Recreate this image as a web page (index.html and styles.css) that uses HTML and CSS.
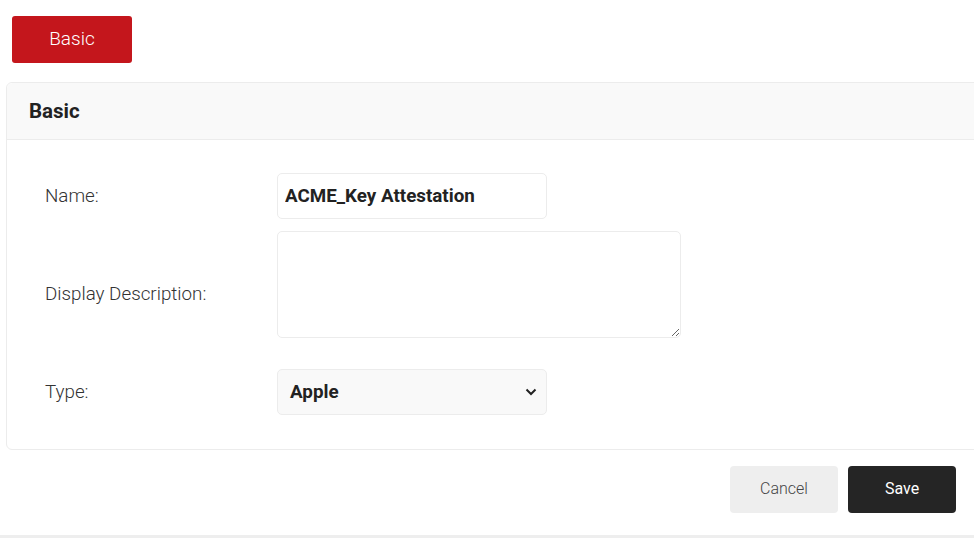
FILE: index.html
```html
<!DOCTYPE html>
<html>
<head>
<meta charset="utf-8">
<link rel="stylesheet" href="styles.css">
</head>
<body>
<div class="page">
  <div class="tabs">
    <button class="tab-btn">Basic</button>
  </div>
  <section class="card">
    <header class="card-header">Basic</header>
    <div class="card-body">
      <div class="form-grid">
        <label class="label">Name:</label>
        <div class="field"><input class="input" type="text" value="ACME_Key Attestation"></div>
        <label class="label">Display Description:</label>
        <div class="field field-ta"><textarea class="textarea"></textarea></div>
        <label class="label">Type:</label>
        <div class="field">
          <div class="select">
            <span>Apple</span>
            <svg class="chev" width="12" height="8" viewBox="0 0 12 8"><path d="M1.5 1.5 L6 6 L10.5 1.5" fill="none" stroke="#222" stroke-width="2"/></svg>
          </div>
        </div>
      </div>
    </div>
  </section>
  <div class="actions">
    <button class="btn btn-cancel">Cancel</button>
    <button class="btn btn-save">Save</button>
  </div>
  <div class="bottom-band"></div>
</div>
</body>
</html>
```
FILE: styles.css
```css
html, body {
  margin: 0;
  padding: 0;
  background: #fff;
  overflow: hidden;
}
body {
  font-family: Roboto, "Liberation Sans", sans-serif;
  color: #333;
}
.page {
  width: 974px;
  height: 538px;
  display: flex;
  flex-direction: column;
}
.tabs {
  padding: 16px 0 0 12px;
  display: flex;
}
.tab-btn {
  width: 120px;
  height: 47px;
  background: #c4161c;
  border: none;
  border-radius: 3px;
  color: #fff;
  font-family: Roboto, sans-serif;
  font-weight: 300;
  font-size: 19px;
  padding: 0 0 3px;
}
.card {
  margin: 19px 0 0 6px;
  width: 980px;
  border: 1px solid #ececec;
  border-radius: 6px;
  box-sizing: border-box;
  height: 368px;
}
.card-header {
  height: 56px;
  background: #f9f9f9;
  border-bottom: 1px solid #ececec;
  border-radius: 6px 6px 0 0;
  display: flex;
  align-items: center;
  padding-left: 22px;
  font-weight: 700;
  font-size: 20.5px;
  color: #222;
}
.card-body {
  padding: 33px 0 0 38px;
}
.form-grid {
  display: grid;
  grid-template-columns: 232px auto;
  row-gap: 12px;
  align-items: center;
}
.label {
  font-size: 18.8px;
  font-weight: 300;
  color: #333;
}
.field {
  display: flex;
}
.field-ta {
  padding-bottom: 19px;
}
.input {
  width: 270px;
  height: 46px;
  box-sizing: border-box;
  border: 1px solid #ececec;
  border-radius: 5px;
  padding: 0 7px;
  font-family: Roboto, sans-serif;
  font-weight: 700;
  font-size: 18.8px;
  color: #222;
  outline: none;
}
.textarea {
  width: 404px;
  height: 107px;
  box-sizing: border-box;
  border: 1px solid #ececec;
  border-radius: 5px;
  display: block;
  margin: 0;
  outline: none;
}
.select {
  width: 270px;
  height: 46px;
  box-sizing: border-box;
  border: 1px solid #ececec;
  border-radius: 5px;
  background: #f9f9f9;
  display: flex;
  align-items: center;
  justify-content: space-between;
  padding: 0 9px 0 12px;
  font-weight: 700;
  font-size: 18.8px;
  color: #222;
}
.actions {
  display: flex;
  justify-content: flex-end;
  gap: 10px;
  padding: 16px 18px 0 0;
}
.btn {
  width: 108px;
  height: 47px;
  border: none;
  border-radius: 4px;
  font-family: Roboto, sans-serif;
  font-size: 16px;
  padding: 0 0 2px;
}
.btn-cancel {
  background: #eee;
  color: #444;
  font-weight: 300;
}
.btn-save {
  background: #252525;
  color: #fff;
  font-weight: 400;
}
.bottom-band {
  margin-top: auto;
  height: 3px;
  background: #eee;
}
```
